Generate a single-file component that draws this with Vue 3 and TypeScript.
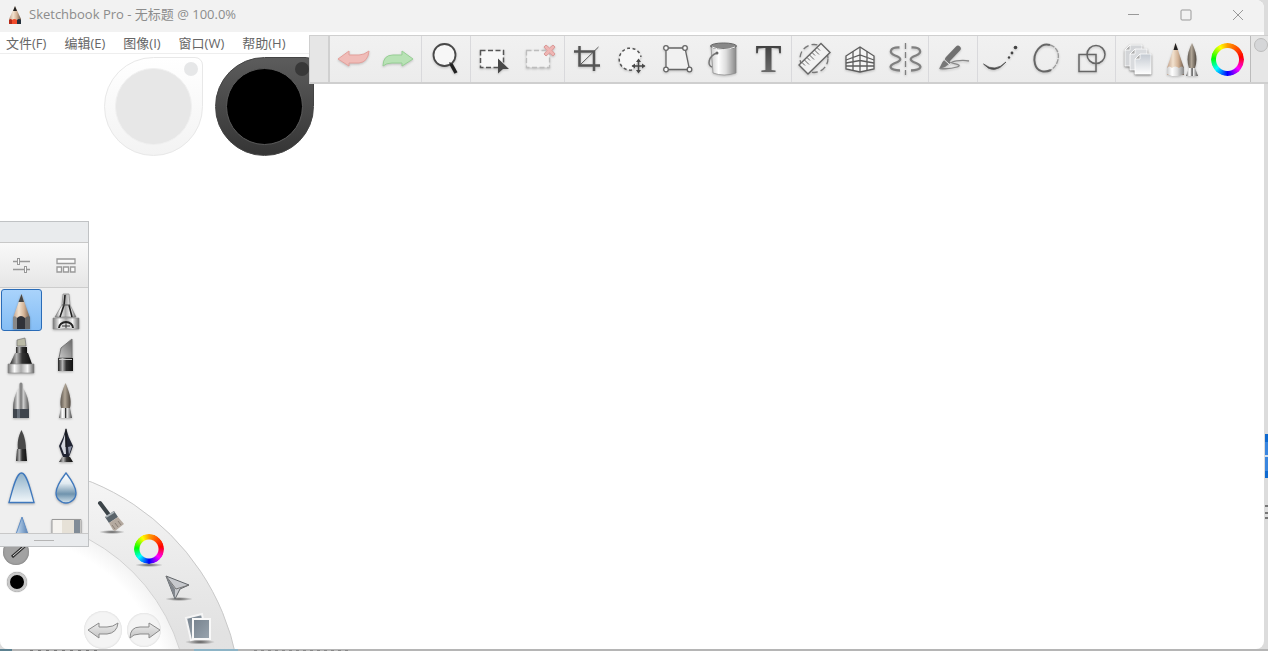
<script setup lang="ts">
interface MenuEntry {
  label: string
}

const title = 'Sketchbook Pro - 无标题 @ 100.0%'

const menus: MenuEntry[] = [
  { label: '文件(F)' },
  { label: '编辑(E)' },
  { label: '图像(I)' },
  { label: '窗口(W)' },
  { label: '帮助(H)' },
]
</script>

<template>
  <div class="desktop">
    <svg class="defs" width="0" height="0" aria-hidden="true">
      <defs>
        <linearGradient id="metal">
          <stop offset="0" stop-color="#777" /><stop offset=".25" stop-color="#fafafa" />
          <stop offset=".5" stop-color="#aaa" /><stop offset=".75" stop-color="#f4f4f4" /><stop offset="1" stop-color="#666" />
        </linearGradient>
        <linearGradient id="barrel">
          <stop offset="0" stop-color="#555" /><stop offset=".3" stop-color="#e8e8e8" />
          <stop offset=".5" stop-color="#777" /><stop offset=".65" stop-color="#ccc" /><stop offset="1" stop-color="#555" />
        </linearGradient>
        <linearGradient id="darkmetal">
          <stop offset="0" stop-color="#222" /><stop offset=".3" stop-color="#b5b5b5" />
          <stop offset=".55" stop-color="#333" /><stop offset="1" stop-color="#111" />
        </linearGradient>
        <linearGradient id="chrome">
          <stop offset="0" stop-color="#555" /><stop offset=".25" stop-color="#fff" /><stop offset=".42" stop-color="#ddd" />
          <stop offset=".5" stop-color="#333" /><stop offset=".62" stop-color="#eee" /><stop offset="1" stop-color="#444" />
        </linearGradient>
        <linearGradient id="wood">
          <stop offset="0" stop-color="#c0a08a" /><stop offset=".35" stop-color="#f2e2cf" />
          <stop offset=".65" stop-color="#d3b396" /><stop offset="1" stop-color="#6e5a4b" />
        </linearGradient>
        <linearGradient id="hair">
          <stop offset="0" stop-color="#5f5850" /><stop offset=".45" stop-color="#b0a596" /><stop offset="1" stop-color="#4e463e" />
        </linearGradient>
        <linearGradient id="blade" x1="1" x2="0" y2="1">
          <stop offset="0" stop-color="#666" /><stop offset="1" stop-color="#c9c9c9" />
        </linearGradient>
        <linearGradient id="bucket">
          <stop offset="0" stop-color="#ccc" /><stop offset=".3" stop-color="#fff" />
          <stop offset=".6" stop-color="#ddd" /><stop offset="1" stop-color="#888" />
        </linearGradient>
        <linearGradient id="letter" x2="0" y2="1">
          <stop offset="0" stop-color="#333" /><stop offset="1" stop-color="#777" />
        </linearGradient>
        <linearGradient id="glass" x2="0" y2="1">
          <stop offset="0" stop-color="#8fb1c9" /><stop offset="1" stop-color="#f2f7fa" />
        </linearGradient>
        <linearGradient id="drop" x2="0" y2="1">
          <stop offset="0" stop-color="#fff" /><stop offset=".35" stop-color="#dfe9f0" />
          <stop offset=".7" stop-color="#6f93ad" /><stop offset="1" stop-color="#d4e3ec" />
        </linearGradient>
        <linearGradient id="cone">
          <stop offset="0" stop-color="#e4eef8" /><stop offset=".5" stop-color="#8fb0d4" /><stop offset="1" stop-color="#44699c" />
        </linearGradient>
        <linearGradient id="sheet" x2="0" y2="1">
          <stop offset="0" stop-color="#c3c9d1" /><stop offset="1" stop-color="#fdfdfd" />
        </linearGradient>
        <linearGradient id="photo" x2="1" y2="1">
          <stop offset="0" stop-color="#76828e" /><stop offset="1" stop-color="#9aa5af" />
        </linearGradient>
        <linearGradient id="arrow" x2="0" y2="1">
          <stop offset="0" stop-color="#ececec" /><stop offset="1" stop-color="#c4c4c4" />
        </linearGradient>
        <linearGradient id="band" x2="0" y2="1">
          <stop offset="0" stop-color="#f7f7f7" /><stop offset=".35" stop-color="#e2e2e2" /><stop offset="1" stop-color="#dedede" />
        </linearGradient>
        <radialGradient id="shade">
          <stop offset="0" stop-color="#333" stop-opacity=".8" /><stop offset="1" stop-color="#333" stop-opacity="0" />
        </radialGradient>
        <radialGradient id="fade" gradientUnits="userSpaceOnUse" cx="0" cy="224" r="188">
          <stop offset=".9" stop-color="#fff" /><stop offset="1" stop-color="#f3f3f3" />
        </radialGradient>
      </defs>
    </svg>

    <main class="window">
      <header class="titlebar">
        <svg class="logo" width="14" height="20" viewBox="0 0 14 20" aria-hidden="true">
          <path d="M7 0L1 13V18H13V13Z" fill="url(#wood)" />
          <path d="M7 0L5 5H9Z" fill="#222" />
          <path d="M1 14Q3 12 4 14V18H1Z" fill="#b62a18" />
          <path d="M4 14Q6 12 9 14V18H4Z" fill="#f04c2c" />
          <path d="M9 14Q11 12 13 14V18H9Z" fill="#25303c" />
        </svg>
        <h1>{{ title }}</h1>
        <div class="controls">
          <button aria-label="最小化"><svg width="12" height="12"><path d="M0 5.500H11" /></svg></button>
          <button aria-label="最大化"><svg width="12" height="12"><rect x="1" y="1" width="10" height="10" rx="1" /></svg></button>
          <button aria-label="关闭"><svg width="12" height="12"><path d="M1 1L11 11M11 1L1 11" /></svg></button>
        </div>
      </header>

      <nav class="menubar">
        <button v-for="menu in menus" :key="menu.label">{{ menu.label }}</button>
      </nav>

      <section class="canvas" aria-label="画布"></section>
    </main>

    <button class="puck light" aria-label="透明色"><span class="disc"></span><span class="dot"></span></button>
    <button class="puck dark" aria-label="当前颜色"><span class="disc"></span><span class="dot"></span></button>

    <div class="toolbar" role="toolbar">
      <div class="grip"></div>
      <div class="group two">
        <button aria-label="撤销">
          <svg class="icon" viewBox="0 0 40 40"><path d="M5 20L16 12V16H26Q31 16 36 12Q35 23 26 24H16V27Z" fill="#f0bcb8" stroke="#e3a09b" /></svg>
        </button>
        <button aria-label="重做">
          <svg class="icon" viewBox="0 0 40 40"><path d="M35 20L24 12V16H15Q5 16 5 27Q8 24 14 24H24V27Z" fill="#b8e2b5" stroke="#97cf95" /></svg>
        </button>
      </div>
      <div class="group one">
        <button aria-label="缩放">
          <svg class="icon" viewBox="0 0 40 40">
            <circle cx="18.500" cy="16" r="11" fill="#f7f7f7" stroke="#484848" stroke-width="1.800" />
            <path d="M24 25L25 24" stroke="#333" stroke-width="3" /><path d="M25 25L30 34" stroke="#222" stroke-width="3.500" />
          </svg>
        </button>
      </div>
      <div class="group pair">
        <button aria-label="选择">
          <svg class="icon" viewBox="0 0 40 40">
            <rect x="6.500" y="11.500" width="23" height="17" fill="#f8f8f8" stroke="#555" stroke-width="1.500" stroke-dasharray="5 2.500" />
            <path d="M24 19.500L35 30L29 30L24 34.500Z" fill="#484848" />
          </svg>
        </button>
        <button aria-label="取消选择">
          <svg class="icon" viewBox="0 0 40 40">
            <rect x="5.500" y="11.500" width="23" height="17" fill="#f2f2f2" stroke="#bdbdbd" stroke-width="1.300" stroke-dasharray="5 2.500" />
            <path d="M25 6L28.500 9L32 6L34 8L31 11.500L34 15L32 17L28.500 14L25 17L23 15L26 11.500L23 8Z" fill="#efb5b3" stroke="#d99a98" />
          </svg>
        </button>
      </div>
      <div class="group five">
        <button aria-label="裁剪">
          <svg class="icon" viewBox="0 0 40 40" fill="none" stroke="#555">
            <path d="M12.500 7V26.500H33M7 12.500H27V32" stroke-width="2.500" /><path d="M12.500 26.500L31.500 8" />
          </svg>
        </button>
        <button aria-label="变换">
          <svg class="icon" viewBox="0 0 40 40">
            <path d="M20 31A11 11 0 1 1 29 18" fill="#f7f7f7" stroke="#555" stroke-width="1.500" stroke-dasharray="3 2.500" />
            <path d="M26.500 21V33M20.500 27H32.500" stroke="#484848" stroke-width="1.500" />
            <path d="M26.500 19.500L29 23H24ZM26.500 34.500L29 31H24ZM19.500 27L23 24.500V29.500ZM33.500 27L30 24.500V29.500Z" fill="#484848" />
          </svg>
        </button>
        <button aria-label="扭曲">
          <svg class="icon" viewBox="0 0 40 40" fill="#f8f8f8" stroke="#666" stroke-width="1.300">
            <path d="M8 9H27L31.500 30.500H8Z" fill="#f1f1f1" />
            <circle cx="8" cy="9" r="2.300" /><circle cx="27" cy="9" r="2.300" /><circle cx="31.500" cy="30.500" r="2.300" /><circle cx="8" cy="30.500" r="2.300" />
          </svg>
        </button>
        <button aria-label="填充">
          <svg class="icon" viewBox="0 0 40 40">
            <path d="M8 7L10 34Q21 38 33 34V7Z" fill="url(#bucket)" stroke="#888" stroke-width=".7" />
            <ellipse cx="20.500" cy="7" rx="13" ry="3" fill="#888" stroke="#666" /><path d="M9 8Q20 13 32 8" fill="none" stroke="#eee" />
            <path d="M14 14C5 17 4 27 9 28" fill="none" stroke="#777" stroke-width="1.500" /><circle cx="14" cy="14" r="1.500" fill="#666" />
          </svg>
        </button>
        <button aria-label="文字">
          <svg class="icon" viewBox="0 0 40 40"><text class="letter" x="20.500" y="33" text-anchor="middle" fill="url(#letter)">T</text></svg>
        </button>
      </div>
      <div class="group three">
        <button aria-label="尺子">
          <svg class="icon" viewBox="0 0 40 40">
            <circle cx="20" cy="19.500" r="14" fill="none" stroke="#777" stroke-width="1.300" stroke-dasharray="6 3" />
            <path d="M27 4.500L36 13.500L14 35L5 26Z" fill="#f2f2f2" stroke="#666" stroke-width="1.400" />
            <path d="M8 23.500L11 26.500M10.500 21L15 25.500M13 18.500L16 21.500M15.500 16L20 20.500M18 13.500L21 16.500M20.500 11L25 15.500M23 8.500L26 11.500" stroke="#666" />
          </svg>
        </button>
        <button aria-label="透视">
          <svg class="icon" viewBox="0 0 40 40" fill="none" stroke="#5c5c5c" stroke-width="1.300">
            <path d="M6 17L20 8L34 17V30L20 33L6 30Z" fill="#f5f5f5" />
            <path d="M20 8V33M13 12.500V31.500M27 12.500V31.500M6 21L20 16L34 21M6 24L20 21.500L34 24M6 27H34" />
          </svg>
        </button>
        <button aria-label="对称">
          <svg class="icon" viewBox="0 0 40 40" fill="none" stroke="#808080" stroke-width="2.300">
            <path d="M13.500 8.500C4 8 2 14 9 16.500S16 21.500 9 24S3 31 14 31.500M25.500 8.500C35 8 37 14 30 16.500S23 21.500 30 24S36 31 25 31.500" />
            <path d="M19.500 4V36" stroke-width="1.300" stroke-dasharray="6 3" />
          </svg>
        </button>
      </div>
      <div class="group one">
        <button aria-label="稳定笔触">
          <svg class="icon" viewBox="0 0 40 40">
            <path d="M25 9.500L15 20" stroke="#707070" stroke-width="5.500" stroke-linecap="round" /><path d="M13 19L18 23.500L12 28L6 30L9.500 23Z" fill="#777" />
            <path d="M11 20.500L17 26" stroke="#eee" /><path d="M36 22C28 20 16 23 19 24S30 26 24 28S12 30 7 29.500" fill="none" stroke="#888" stroke-width="1.300" />
          </svg>
        </button>
      </div>
      <div class="group three">
        <button aria-label="预测笔触">
          <svg class="icon" viewBox="0 0 40 40"><path d="M2.500 25Q13 37 25 23Q14 34 2.500 25Z" fill="#444" stroke="#555" stroke-width=".8" />
            <circle cx="28" cy="18.500" r="1.200" fill="#444" /><circle cx="31" cy="14" r="1.400" fill="#444" /><circle cx="34.500" cy="8.500" r="1.800" fill="#444" />
          </svg>
        </button>
        <button aria-label="椭圆">
          <svg class="icon" viewBox="0 0 40 40" fill="none" stroke="#666" stroke-width="1.500">
            <path d="M23 6C14 3 5 14 8 25C10 33 18 34 24 31" stroke-width="2" />
            <path d="M23 6C34 9 34 24 24 31" stroke="#999" stroke-width="1.300" stroke-dasharray="5 1" />
          </svg>
        </button>
        <button aria-label="形状">
          <svg class="icon" viewBox="0 0 40 40" fill="none" stroke="#666" stroke-width="1.500">
            <rect x="7" y="15.500" width="17" height="17" /><circle cx="24" cy="15.500" r="9" />
          </svg>
        </button>
      </div>
      <div class="group last">
        <button aria-label="图层">
          <svg class="icon sheets" viewBox="0 0 40 40" stroke="#fff" stroke-width=".8">
            <path d="M12 6H24V27H7V11Z" fill="#d3d5d8" /><path d="M17 10H29V31H12V15Z" fill="#d9dbde" /><path d="M22 15H33V35H17V20Z" fill="url(#sheet)" />
            <path d="M12 6V11H7ZM17 10V15H12ZM22 15V20H17Z" fill="#aaa" />
          </svg>
        </button>
        <button aria-label="画笔">
          <svg class="icon" viewBox="0 0 40 40">
            <path d="M12.500 4L4 29V36H21V29Z" fill="url(#wood)" /><path d="M12.500 4L10.500 11H15Z" fill="#222" />
            <path d="M4 29Q6 26 9 29Q12 26 16 29Q19 26 21 29V35L16 37H9L4 35Z" fill="url(#bucket)" />
            <path d="M29 4Q22 18 26 29H32Q36 18 29 4Z" fill="url(#hair)" /><path d="M26 29H32L35 37H23Z" fill="url(#chrome)" />
          </svg>
        </button>
        <button aria-label="颜色"><span class="wheel large"></span></button>
      </div>
      <div class="grip end"><span></span></div>
    </div>

    <div class="lagoon">
      <svg class="ring" width="250" height="168" viewBox="0 0 250 168" aria-hidden="true">
        <circle cx="0" cy="224" r="241" fill="url(#band)" stroke="#c9c9c9" />
        <circle cx="0" cy="224" r="188" fill="url(#fade)" stroke="#d2d2d2" />
      </svg>
      <button class="spot brush" aria-label="画笔工具">
        <svg width="40" height="44" viewBox="0 0 40 44">
          <ellipse cx="19" cy="35" rx="13" ry="2" fill="url(#shade)" />
          <path d="M7 6L16 18" stroke="#3c4449" stroke-width="4" stroke-linecap="round" />
          <path d="M12 20L21 14L25 20L16 26Z" fill="#5a646b" /><path d="M13 20L21 15" stroke="#aab2b7" stroke-width="2" />
          <path d="M16 26L25 20L31 27L22 34L20 33Z" fill="#b5aaa0" /><path d="M19 28L22 32M22 26L25 30M25 24L28 28" stroke="#8b8178" />
        </svg>
      </button>
      <button class="spot hue" aria-label="色轮"><span class="wheel small"></span></button>
      <button class="spot pointer" aria-label="界面">
        <svg width="34" height="32" viewBox="0 0 34 32">
          <ellipse cx="17" cy="27" rx="14" ry="2" fill="url(#shade)" />
          <path d="M4 4L27 13L18 17L13 27Z" fill="#c8cace" stroke="#606468" /><path d="M4 4L13 17V27Z" fill="#81868c" /><path d="M4 4L14 17L27 13" fill="none" stroke="#777" />
        </svg>
      </button>
      <button class="spot layers" aria-label="图像">
        <svg width="36" height="36" viewBox="0 0 36 36">
          <ellipse cx="18" cy="31" rx="15" ry="2.500" fill="url(#shade)" />
          <path d="M4 7L20 3L24 25L9 29Z" fill="url(#photo)" stroke="#f5f5f5" stroke-width="2" />
          <rect x="11" y="8" width="17" height="20" fill="url(#photo)" stroke="#f8f8f8" stroke-width="2" />
        </svg>
      </button>
      <button class="spot stepback" aria-label="后退">
        <svg width="38" height="38" viewBox="0 0 38 38"><path d="M4 19L15 12V16H23Q29 16 34 12Q33 22 23 23H15V27Z" fill="url(#arrow)" stroke="#8b8b8b" /></svg>
      </button>
      <button class="spot stepon" aria-label="前进">
        <svg width="34" height="34" viewBox="0 0 34 34"><path d="M33 17L22 10V14H13Q3 14 3 25Q6 21 13 21H22V25Z" fill="url(#arrow)" stroke="#8b8b8b" /></svg>
      </button>
      <button class="spot size" aria-label="笔刷大小">
        <svg width="26" height="26" viewBox="0 0 26 26"><path d="M9 18L25 4" stroke="#333" stroke-width="3" /><path d="M10 17L24 5" stroke="#ddd" /></svg>
      </button>
      <button class="spot ink" aria-label="墨色"></button>
    </div>

    <aside class="palette" aria-label="笔刷面板">
      <div class="handle"></div>
      <div class="modes">
        <button aria-label="笔刷属性">
          <svg width="20" height="18" viewBox="0 0 20 18" fill="#fafafa" stroke="#999"><path d="M1 5.500H18M1 13.500H18" stroke-width="1.300" /><rect x="5.500" y="2.500" width="2" height="6" /><rect x="12.500" y="10.500" width="2" height="6" /></svg>
        </button>
        <button aria-label="笔刷库">
          <svg width="20" height="18" viewBox="0 0 20 18" fill="#fafafa" stroke="#999" stroke-width="1.300"><path d="M1 3H19V7.500H1ZM1 11H5.500V16H1ZM7.500 11H12.500V16H7.500ZM14.500 11H19V16H14.500Z" /></svg>
        </button>
      </div>
      <div class="brushes">
        <button class="active" aria-label="铅笔">
          <svg viewBox="0 0 44 44"><path d="M21.500 6L13 30V41H30V30Z" fill="url(#wood)" /><path d="M21.500 6L18.500 14H24Z" fill="#444" />
            <path d="M13 29Q15 27 17 30V41H13Z" fill="#888" /><path d="M17 30Q21 26 25 30V41H17Z" fill="#303238" /><path d="M25 30Q28 27 30 29V41H25Z" fill="#666" /></svg>
        </button>
        <button aria-label="喷枪">
          <svg viewBox="0 0 44 44"><path d="M19 6H25L26 17L32 29H11L18 17Z" fill="url(#metal)" stroke="#777" stroke-width=".6" />
            <path d="M21 7L20 17L16 29M25 17L28 29" fill="none" stroke="#222" stroke-width="1.600" /><path d="M18 17H26" stroke="#555" />
            <path d="M9 30H35V41H9Z" fill="url(#metal)" stroke="#888" stroke-width=".6" /><path d="M15 40A7 6 0 0 1 29 40" fill="#ddd" stroke="#222" stroke-width="2" /><path d="M22 35V40M18 38H26" stroke="#333" /></svg>
        </button>
        <button aria-label="马克笔">
          <svg viewBox="0 0 44 44"><path d="M17 7L25 5L26 13H17Z" fill="#b9b9a6" stroke="#666" stroke-width=".6" /><path d="M16 14H27V20H16Z" fill="url(#darkmetal)" />
            <path d="M15 20H28L32 31H10Z" fill="url(#darkmetal)" /><path d="M8 31H34V40H8Z" fill="url(#metal)" stroke="#888" stroke-width=".6" /></svg>
        </button>
        <button aria-label="凿形笔">
          <svg viewBox="0 0 44 44"><path d="M28 6L17 15L15 25H28Z" fill="url(#blade)" stroke="#777" /><path d="M14 25H29V38H14Z" fill="url(#darkmetal)" /><path d="M15 26.500H28" stroke="#ccc" /></svg>
        </button>
        <button aria-label="圆珠笔">
          <svg viewBox="0 0 44 44"><path d="M19.500 6A1.500 1.500 0 0 1 22.500 6V11H19.500Z" fill="#888" /><path d="M19 10H23Q29 19 29 31H13Q13 19 19 10Z" fill="url(#barrel)" /><path d="M13 31H29V40H13Z" fill="#3f454d" /><path d="M17 31H20V40H17Z" fill="#68707a" /></svg>
        </button>
        <button aria-label="画笔">
          <svg viewBox="0 0 44 44"><path d="M21.500 5C18 13 15 22 17 30H26C28 22 25 13 21.500 5Z" fill="url(#hair)" /><path d="M17 30H26L28 40H15Z" fill="url(#chrome)" /></svg>
        </button>
        <button aria-label="墨笔">
          <svg viewBox="0 0 44 44"><path d="M21.500 7C18 14 17 20 18 27H26C26 20 25 14 21.500 7Z" fill="#484848" /><path d="M17 26H26L27 38H16Z" fill="url(#darkmetal)" /></svg>
        </button>
        <button aria-label="钢笔">
          <svg viewBox="0 0 44 44"><path d="M22 5Q20 14 15 23Q17 29 19 34H25Q27 29 29 23Q24 14 22 5Z" fill="#202432" /><path d="M21 11Q20 16 17 23L20 31H22Z" fill="#d3d6df" /><path d="M24 24L25 32L28 23Z" fill="#8c92a5" /><path d="M22 6V24" stroke="#111" />
            <path d="M18 34H26L29 39H15Z" fill="url(#darkmetal)" /></svg>
        </button>
        <button aria-label="硬喷">
          <svg viewBox="0 0 44 44"><path d="M9 34.500C12 24 16 5 21.500 5S31 24 34 34.500Z" fill="url(#glass)" stroke="#3f78bd" stroke-width="1.300" /></svg>
        </button>
        <button aria-label="水滴">
          <svg viewBox="0 0 44 44"><path d="M22 5Q12 18 12 25A10 10 0 0 0 32 25Q32 18 22 5Z" fill="url(#drop)" stroke="#3f78bd" stroke-width="1.300" /></svg>
        </button>
        <button aria-label="锐化">
          <svg viewBox="0 0 44 44"><path d="M22 4L13 30H31Z" fill="url(#cone)" stroke="#5f8dc4" /></svg>
        </button>
        <button aria-label="橡皮">
          <svg viewBox="0 0 44 44"><path d="M8 6.500H37V30H8Z" fill="#f5f3ef" stroke="#999" /><path d="M18 7H30V30H18Z" fill="#e6e1d7" /><path d="M30 7H36V30H30Z" fill="#818c97" /></svg>
        </button>
      </div>
      <div class="resize"><span></span></div>
    </aside>
  </div>
</template>

<style>
html,
body,
#app {
  height: 100%;
}

body {
  margin: 0;
  overflow: hidden;
}
</style>

<style scoped>
.desktop {
  position: relative;
  box-sizing: border-box;
  height: 100vh;
  padding: 0 4px 2px 0;
  overflow: hidden;
  font-family: "Open Sans", "Noto Sans CJK SC", sans-serif;
  background:
    linear-gradient(#0f6ad0 0 8px, #3a86df 8px 21px, #cfe0f2 21px 23px, #3a86df 23px 37px, #0f6ad0 37px) right 434px / 3px 44px no-repeat,
    linear-gradient(#777 0 2px, #ddd 2px 7px, #777 7px 9px, #ddd 9px 12px, #777 12px) right 505px / 3px 14px no-repeat,
    repeating-linear-gradient(90deg, #777 0 3px, #b5b5b5 3px 8px) 30px bottom / 72px 1px no-repeat,
    repeating-linear-gradient(90deg, #888 0 3px, #b5b5b5 3px 7px) 254px bottom / 98px 1px no-repeat,
    linear-gradient(90deg, #5c8190 0 12px, #b5b5b5 12px 194px, #8db4c6 194px 238px, #b5b5b5 238px) left bottom / 100% 2px no-repeat,
    #dcdcdc;
}

.defs {
  position: absolute;
}

button {
  display: grid;
  place-items: center;
  margin: 0;
  padding: 0;
  border: 0;
  background: none;
  color: inherit;
  font: inherit;
}

.window {
  display: flex;
  flex-direction: column;
  height: 100%;
  overflow: hidden;
  border-radius: 0 8px 8px 8px;
  background: #fff;
}

.titlebar {
  display: flex;
  flex: none;
  align-items: center;
  height: 32px;
  padding-left: 8px;
  background: #f2f2f2;
}

.titlebar h1 {
  flex: 1;
  margin: 0 0 4px 7px;
  color: #8c8c8c;
  font-size: 13px;
  font-weight: 400;
  line-height: 20px;
}

.controls {
  display: flex;
  align-self: stretch;
}

.controls button {
  width: 52px;
  height: 30px;
}

.controls svg {
  fill: none;
  stroke: #999;
}

.menubar {
  display: flex;
  flex: none;
  gap: 18px;
  height: 21px;
  padding-left: 6px;
  border-bottom: 1px solid #eee;
  color: #666;
  font-size: 13px;
  line-height: 20px;
}

.canvas {
  flex: 1;
}

.puck {
  position: absolute;
  top: 57px;
  width: 99px;
  height: 99px;
  border-radius: 50px 8px 50px 50px;
}

.puck.light {
  left: 104px;
  border: 1px solid #e8e8e8;
  background: linear-gradient(#fff, #f3f3f3);
}

.puck.dark {
  left: 215px;
  border: 1px solid #444;
  background: linear-gradient(#5c5c5c, #353535);
}

.disc {
  width: 75px;
  height: 75px;
  border: 1px solid #f0f0f0;
  border-radius: 50%;
  background: #e7e7e7;
}

.dark .disc {
  border-color: #5a5a5a;
  background: #000;
}

.dot {
  position: absolute;
  top: 4px;
  right: 4px;
  width: 14px;
  height: 14px;
  border-radius: 50%;
  background: #e6e7e8;
}

.dark .dot {
  background: #383838;
}

.toolbar {
  position: absolute;
  top: 35px;
  right: 0;
  left: 309px;
  display: flex;
  box-sizing: border-box;
  height: 49px;
  border: solid #cfcfcf;
  border-width: 1px 0 2px 1px;
  background: linear-gradient(#f1f1f1, #ececec);
}

.grip {
  flex: 0 0 18px;
  border-right: 2px solid #d0d0d0;
  background: #e6e6e6;
}

.grip.end {
  flex-basis: 16px;
  border-right: 0;
}

.grip.end span {
  display: block;
  width: 12px;
  height: 12px;
  margin: 2px 0 0 3px;
  border: 1px solid #bcbcbc;
  border-radius: 50%;
  background: #d5d6d8;
}

.group {
  display: flex;
  border-right: 1px solid #d9d9dc;
}

.group button {
  flex: 1;
  min-width: 0;
}

.two { flex: 91 1 0; }
.one { flex: 48 1 0; }
.pair { flex: 93 1 0; }
.five { flex: 226 1 0; }
.three { flex: 137 1 0; }
.last { flex: 134 1 0; border-right-color: #bbb; }

.icon {
  width: 40px;
  height: 40px;
  overflow: visible;
  filter: drop-shadow(0 1px 1px #0003);
}

.icon.sheets {
  filter: drop-shadow(0 1px 1px #0008);
}

.letter {
  font-family: "Liberation Serif", serif;
  font-size: 39px;
  font-weight: 700;
}

.wheel {
  border-radius: 50%;
  background: conic-gradient(#ffa000, #f00 80deg, #f0f 130deg, #00f 180deg, #0ff 230deg, #0f0 275deg, #ff0 330deg, #ffa000);
}

.wheel.large {
  width: 33px;
  height: 33px;
  mask: radial-gradient(circle, transparent 11px, #000 12px);
}

.wheel.small {
  width: 30px;
  height: 30px;
  mask: radial-gradient(circle, transparent 9px, #000 10px);
}

.lagoon {
  position: absolute;
  bottom: 2px;
  left: 0;
  width: 250px;
  height: 168px;
  overflow: hidden;
  border-bottom-left-radius: 8px;
}

.ring {
  display: block;
}

.spot {
  position: absolute;
}

.brush { top: 16px; left: 93px; }
.hue { top: 53px; left: 134px; }
.hue::after {
  position: absolute;
  bottom: -3px;
  width: 28px;
  height: 4px;
  background: radial-gradient(closest-side, #0009, transparent);
  content: "";
}
.pointer { top: 91px; left: 162px; }
.layers { top: 130px; left: 182px; }

.stepback,
.stepon {
  border-radius: 50%;
  background: #f4f4f4;
  box-shadow: inset 0 0 2px #ccc;
}

.stepback { top: 130px; left: 84px; }
.stepon { top: 132px; left: 127px; }

.size {
  top: 58px;
  left: 3px;
  border-radius: 50%;
  background: #a2a2a2;
  box-shadow: inset 0 0 2px #666;
}

.ink {
  top: 91px;
  left: 7px;
  width: 20px;
  height: 20px;
  border: 3px solid #c9c9c9;
  border-radius: 50%;
  background: #000;
  box-shadow: 0 0 1px #555;
}

.palette {
  position: absolute;
  top: 221px;
  left: 0;
  display: flex;
  flex-direction: column;
  box-sizing: border-box;
  width: 89px;
  border: solid #c0c2c4;
  border-width: 1px 1px 1px 0;
  background: #efefef;
}

.handle {
  height: 20px;
  border-bottom: 1px solid #c8c8c8;
  background: #e9ebed;
}

.modes {
  display: grid;
  grid-template-columns: 1fr 1fr;
  height: 44px;
  border-bottom: 1px solid #ccc;
  background: linear-gradient(#f9f9f9, #e6e6e6);
}

.brushes {
  display: grid;
  grid-template-columns: 1fr 1fr;
  grid-auto-rows: 45px;
  height: 245px;
  overflow: hidden;
}

.brushes button {
  place-items: start;
}

.brushes svg {
  display: block;
  width: 44px;
  height: 44px;
  filter: drop-shadow(0 1px 1px #0004);
}

.brushes .active {
  position: relative;
  background: linear-gradient(#a9d3fb, #84bdf5) 2px 2px / 39px 40px no-repeat;
}

.brushes .active::before {
  position: absolute;
  inset: 1px 2px 2px 1px;
  border: 1px solid #2a6cb8;
  border-radius: 3px;
  content: "";
}

.resize {
  display: grid;
  place-items: center;
  height: 12px;
  border-top: 1px solid #c8c8c8;
  background: #e9ebed;
}

.resize span {
  width: 20px;
  height: 1px;
  background: #b5b5b5;
}
</style>
